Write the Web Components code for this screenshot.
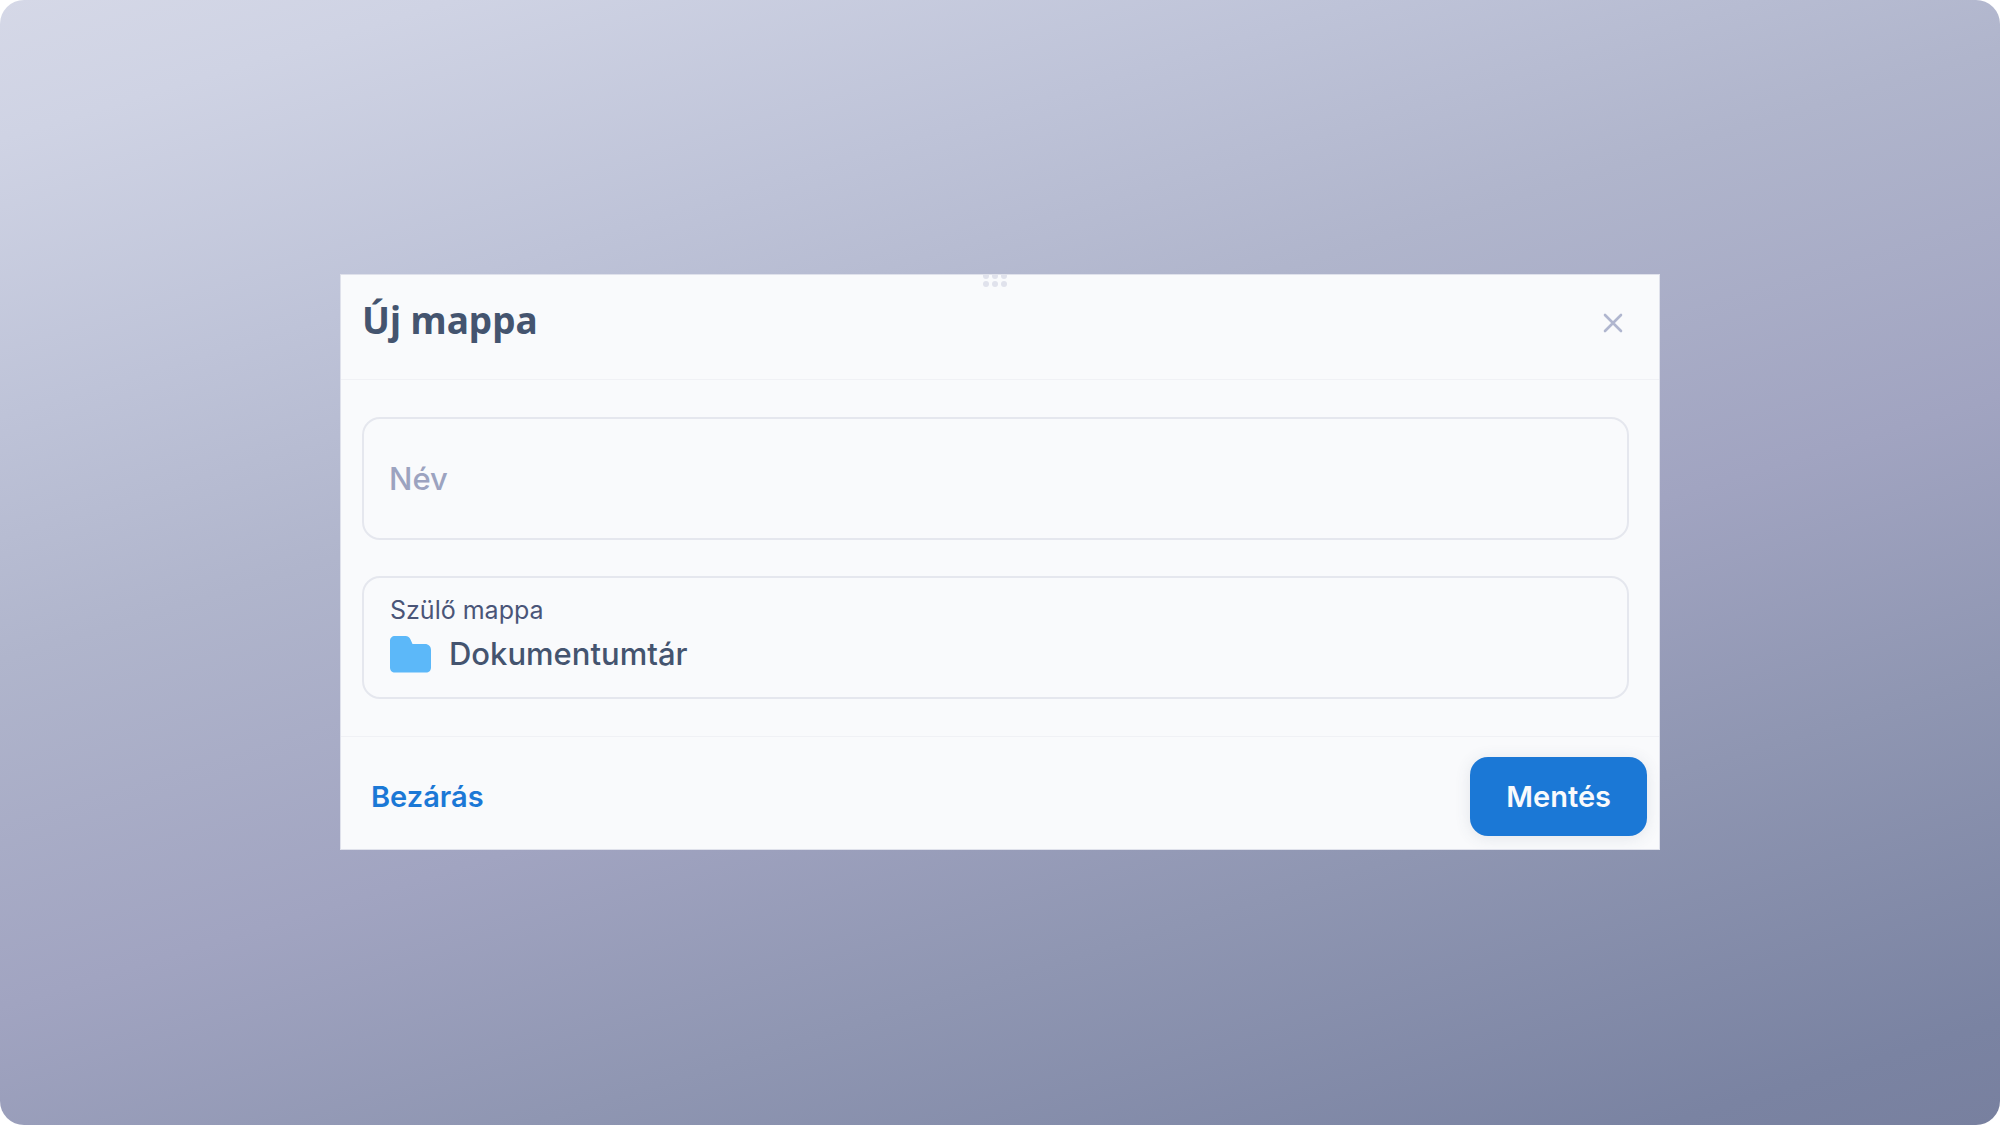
<!DOCTYPE html>
<html lang="hu">
<head>
<meta charset="utf-8">
<title>Új mappa</title>
<style>
  html { background: #fff; }
  body { margin: 0; font-family: Inter, "Liberation Sans", sans-serif; }
</style>
</head>
<body>
<app-backdrop>
  <folder-dialog heading="Új mappa">
    <text-field placeholder="Név"></text-field>
    <folder-field label="Szülő mappa">Dokumentumtár</folder-field>
    <dialog-button slot="actions" variant="text">Bezárás</dialog-button>
    <dialog-button slot="actions" variant="primary">Mentés</dialog-button>
  </folder-dialog>
</app-backdrop>
<script>
const define = (name, html, setup) => {
  const template = document.createElement('template');
  template.innerHTML = html;
  customElements.define(name, class extends HTMLElement {
    constructor() {
      super();
      this.attachShadow({ mode: 'open' }).append(template.content.cloneNode(true));
      if (setup) setup(this, this.shadowRoot);
    }
  });
};

define('app-backdrop', `
  <style>
    :host {
      display: flex; align-items: center; justify-content: center;
      min-height: 100vh; box-sizing: border-box; padding-bottom: 1px; border-radius: 24px;
      background: linear-gradient(163deg, #d5d8e7 0%, #cfd3e4 8%, #bec3d8 24%, #b0b5cc 38%, #a1a4c1 58%, #8f96b2 74%, #7a83a2 94%, #78809f 100%);
    }
  </style>
  <slot></slot>`);

define('folder-dialog', `
  <style>
    :host {
      display: block; width: 66%; box-sizing: border-box; position: relative;
      background: #f9fafc; border: 1px solid #dfe1eb;
      color: #44546f; overflow: hidden;
    }
    .grip { position: absolute; top: -2px; left: 50%; margin-left: -18px; display: block; }
    header {
      display: flex; align-items: flex-start; justify-content: space-between;
      height: 105px; box-sizing: border-box; padding: 20px 33px 0 21px;
      border-bottom: 1px solid #f0f1f5;
    }
    h1 { margin: 0; font: 700 37px/50px "Noto Sans", sans-serif; }
    .close { display: flex; padding: 15px 0; margin: 0; border: 0; background: none; color: #b0b6cf; }
    .body { display: flex; flex-direction: column; gap: 36px; padding: 37px 30px 37px 21px; }
    footer {
      display: flex; justify-content: space-between; align-items: center;
      padding: 20px 12px 13px 21px; border-top: 1px solid #f0f1f5;
    }
  </style>
  <svg class="grip" width="26" height="16" viewBox="0 0 26 16" fill="#e0e2ec" aria-hidden="true">
    <circle cx="4" cy="3" r="3"/><circle cx="13" cy="3" r="3"/><circle cx="22" cy="3" r="3"/>
    <circle cx="4" cy="11" r="3"/><circle cx="13" cy="11" r="3"/><circle cx="22" cy="11" r="3"/>
  </svg>
  <header>
    <h1></h1>
    <button class="close" type="button" aria-label="Bezárás">
      <svg width="26" height="26" viewBox="0 0 26 26" fill="none" stroke="currentColor" stroke-width="2.6" stroke-linecap="round"><path d="M5 5 21 21M21 5 5 21"/></svg>
    </button>
  </header>
  <div class="body"><slot></slot></div>
  <footer><slot name="actions"></slot></footer>`,
  (host, root) => { root.querySelector('h1').textContent = host.getAttribute('heading'); });

define('text-field', `
  <style>
    :host { display: block; }
    input {
      display: block; width: 100%; height: 123px; box-sizing: border-box;
      border: 2px solid #e5e7ee; border-radius: 18px; background: transparent;
      padding: 0 25px; font: 500 31px/40px Inter, sans-serif; color: #44546f; outline: 0;
    }
    input::placeholder { color: #9ca3c0; opacity: 1; }
  </style>
  <input type="text">`,
  (host, root) => {
    const input = root.querySelector('input');
    input.placeholder = host.getAttribute('placeholder');
    input.setAttribute('aria-label', input.placeholder);
  });

define('folder-field', `
  <style>
    :host {
      display: flex; flex-direction: column; height: 123px; box-sizing: border-box;
      border: 2px solid #e5e7ee; border-radius: 18px; padding: 16px 26px; gap: 8px;
    }
    .label { font: 400 25px/32px Inter, sans-serif; color: #4a5578; }
    .value { display: flex; align-items: center; gap: 18px; font: 500 31px/40px Inter, sans-serif; }
    svg { display: block; flex: none; }
  </style>
  <span class="label"></span>
  <span class="value">
    <svg width="41" height="37" viewBox="0 0 41 37" fill="#5cb8f9" aria-hidden="true"><path d="M5 0H15.500C18 0 19.500 1.500 20.500 3.500L22.500 8H35C38.500 8 41 10.500 41 14V31.500C41 34.500 39 36.500 36 36.500H5C2 36.500 0 34.500 0 31.500V5C0 2 2 0 5 0Z"/></svg>
    <span><slot></slot></span>
  </span>`,
  (host, root) => { root.querySelector('.label').textContent = host.getAttribute('label'); });

define('dialog-button', `
  <style>
    :host { display: block; }
    button {
      display: block; margin: 0; border: 0; height: 79px; padding: 0 9px; cursor: pointer;
      font: 600 29px/36px Inter, sans-serif; color: #1b78d6; background: none; border-radius: 18px;
    }
    :host([variant="primary"]) button {
      padding: 0 36px; background: #1b78d6; color: #f9fafc;
      box-shadow: 0 2px 16px rgba(68, 84, 111, .12);
    }
  </style>
  <button type="button"><slot></slot></button>`);
</script>
</body>
</html>
